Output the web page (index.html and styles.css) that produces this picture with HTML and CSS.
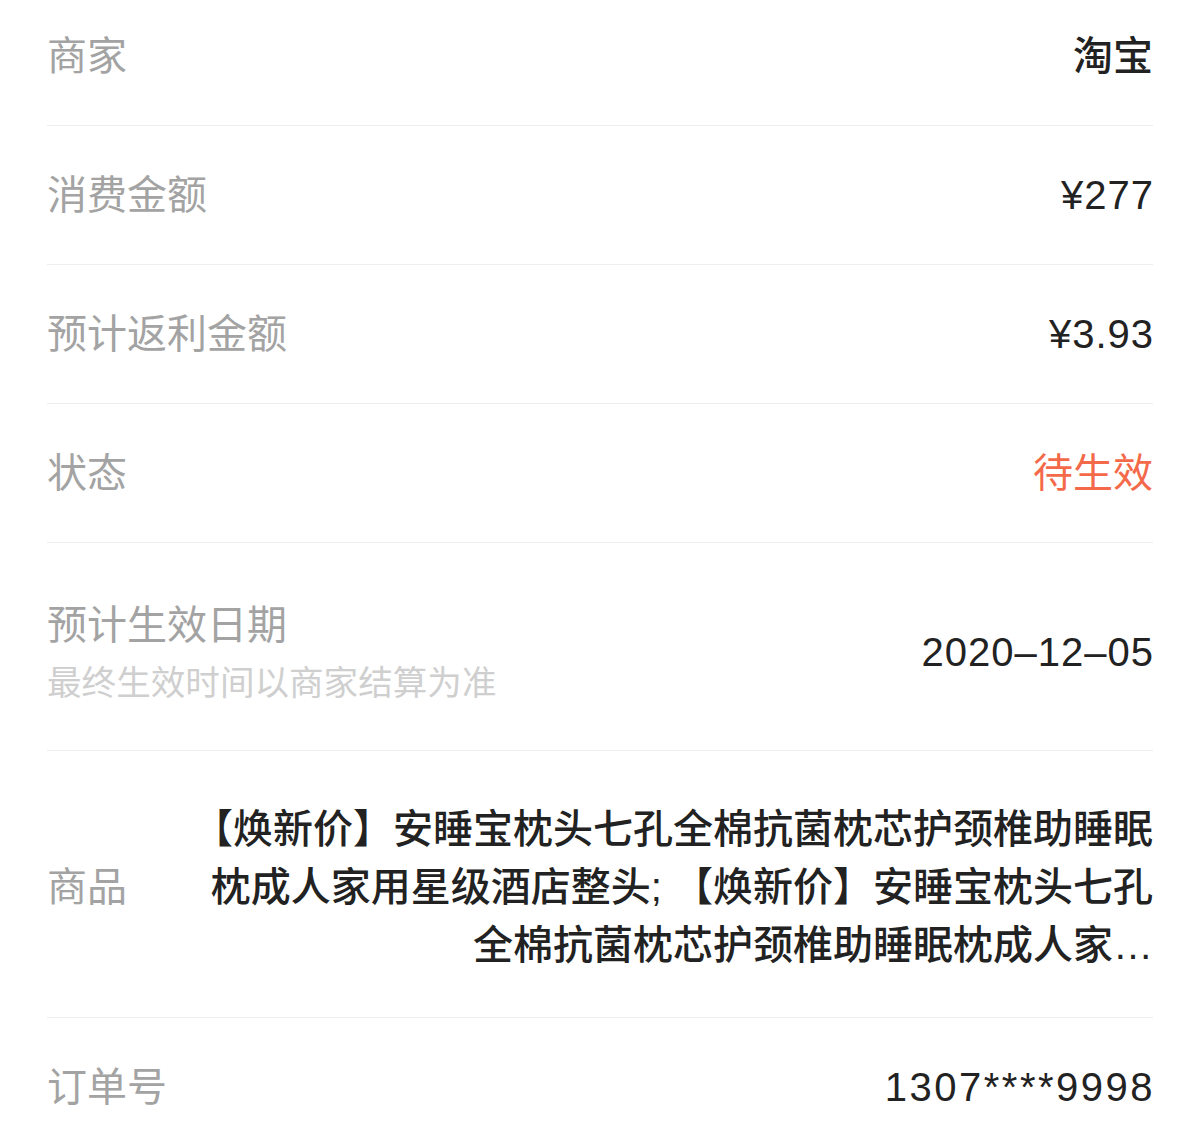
FILE: index.html
```html
<!doctype html>
<html lang="zh-CN">
  <head>
    <meta charset="UTF-8" />
    <meta name="viewport" content="width=device-width, initial-scale=1.0" />
    <title>订单详情</title>
    <link rel="stylesheet" href="styles.css">
  </head>
  <body>
    <!-- 订单信息 -->
    <ul class="info-list">
      <li class="info-row">
        <span class="label">商家</span>
        <span class="value">淘宝</span>
      </li>
      <li class="info-row">
        <span class="label">消费金额</span>
        <span class="value num">¥277</span>
      </li>
      <li class="info-row">
        <span class="label">预计返利金额</span>
        <span class="value num">¥3.93</span>
      </li>
      <li class="info-row">
        <span class="label">状态</span>
        <span class="value status">待生效</span>
      </li>
      <li class="info-row date-row">
        <div class="label-group">
          <span class="label">预计生效日期</span>
          <span class="sub-label">最终生效时间以商家结算为准</span>
        </div>
        <span class="value num">2020–12–05</span>
      </li>
      <li class="info-row goods-row">
        <span class="label">商品</span>
        <span class="value goods">【焕新价】安睡宝枕头七孔全棉抗菌枕芯护颈椎助睡眠枕成人家用星级酒店整头; 【焕新价】安睡宝枕头七孔全棉抗菌枕芯护颈椎助睡眠枕成人家…</span>
      </li>
      <li class="info-row">
        <span class="label">订单号</span>
        <span class="value num order-no">1307****9998</span>
      </li>
    </ul>
  </body>
</html>
```

FILE: styles.css
```css
* {
  margin: 0;
  padding: 0;
  box-sizing: border-box;
}
body {
  font-family: "Liberation Sans", "Noto Sans CJK SC", sans-serif;
  background: #fff;
  overflow: hidden;
}
.info-list {
  list-style: none;
  margin: -13px 47px 0 47px;
}
.info-row {
  display: flex;
  justify-content: space-between;
  align-items: center;
  padding: 41px 0;
  border-bottom: 1px solid #eeeeee;
  font-size: 40px;
  line-height: 56px;
}
.label {
  color: #a3a3a3;
  flex-shrink: 0;
}
.value {
  color: #222;
  text-align: right;
  font-weight: 500;
}
.num {
  letter-spacing: 1px;
  margin-right: -1px;
}
.order-no {
  letter-spacing: 2.5px;
  margin-right: -2px;
}
.status {
  color: #f5694b;
  font-weight: 400;
}
.date-row {
  padding: 54px 0 43px;
}
.label-group {
  display: flex;
  flex-direction: column;
}
.sub-label {
  color: #cfcfcf;
  font-size: 34.6px;
  line-height: 48px;
  margin-top: 6px;
}
.goods-row {
  padding: 49px 0 43px;
}
.goods {
  flex: 1;
  margin-left: 60px;
  line-height: 58px;
}
```
